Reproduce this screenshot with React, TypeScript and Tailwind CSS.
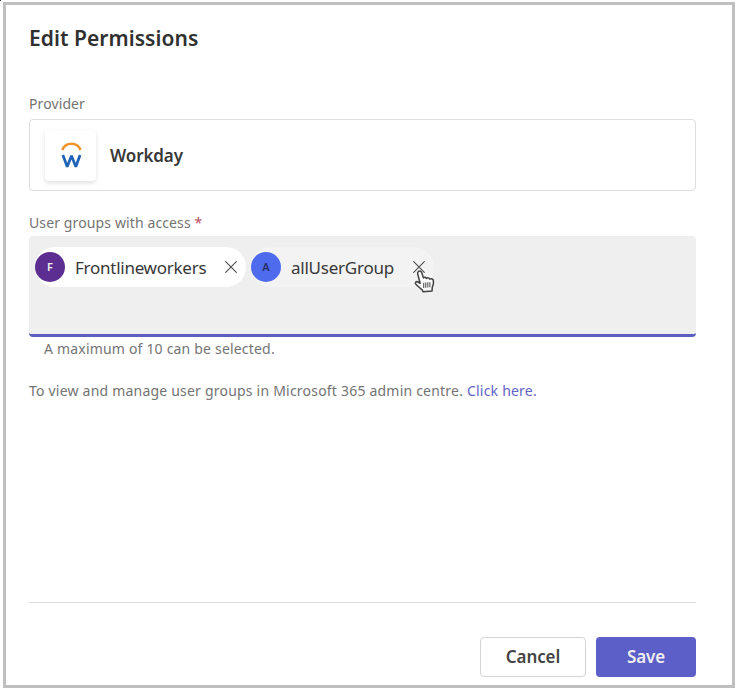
import React from "react";

function WorkdayLogo() {
  return (
    <svg width="22" height="28" viewBox="0 0 22 28" fill="none" aria-label="Workday">
      <path d="M2.3 9C5.4 .5 17.4 .5 20.5 9" stroke="#f0952d" strokeWidth="2.5" />
      <path d="M2.9 14L7.2 25.7L11.5 14.8L15.8 25.7L20.1 14" stroke="#1d62b7" strokeWidth="2.7" strokeLinejoin="bevel" />
    </svg>
  );
}

function CloseIcon() {
  return (
    <svg width="12" height="12" viewBox="0 0 12 12" fill="none" stroke="#4c4c4c" strokeWidth="1.1" strokeLinecap="round">
      <path d="M.7.7l10.6 10.6M11.3.7L.7 11.3" />
    </svg>
  );
}

function HandCursor() {
  return (
    <svg className="absolute left-0 top-[8px]" width="24" height="26" viewBox="0 0 22 24" fill="none">
      <path
        d="M5 2.2C6.4 1.2 7.5 2 8 3.4L9.6 8.2C10.5 7.3 11.8 7.6 12.3 8.8C13.3 7.7 14.8 8.1 15.4 9.4C17 8.5 18.6 9.3 18.8 11.1C19.1 13.3 18.5 15.2 17.7 17L17.5 20.2L9.3 21.1L8.4 19.3C6.7 17.9 4.8 16.1 2.8 14.3C1.1 12.8 2.8 11 4.6 12L6.5 13.2L4.3 4.7C4 3.6 4.2 2.7 5 2.2Z"
        fill="#fafafa"
        stroke="#414141"
        strokeWidth="1.4"
        strokeLinejoin="round"
      />
      <path d="M9.8 12.6v5M11.7 12.4v5M13.6 12.3v4.8M15.5 12.2v4.6" stroke="#555" strokeWidth="1" />
    </svg>
  );
}

export default function App() {
  return (
    <div className="h-[688px] w-[735px] overflow-hidden bg-white pl-[3px] pt-[2px] font-['Noto_Sans','Open_Sans',sans-serif]">
      <div className="absolute left-0 top-0 size-px bg-[#333]" />
      <section className="flex h-[686px] w-[732px] flex-col border-[3px] border-[#bfbfbf] pl-[23px] pr-[36px] whitespace-nowrap">
        <h1 className="mt-[18px] h-[30px] text-[21px] font-semibold leading-[30px] tracking-[0.05px] text-[#303030]">
          <span>Edit Permissions</span>
        </h1>
        <p className="mt-[41px] h-5 text-[14px] leading-5 tracking-[0.1px] text-[#747474]"><span>Provider</span></p>
        <div className="mt-[5px] flex h-[72px] shrink-0 items-center rounded-[4px] border border-[#dedede] pl-[15px]">
          <div className="flex size-[51px] items-center justify-center rounded-[4px] bg-white shadow-[0_2px_4px_rgba(0,0,0,0.13)]">
            <WorkdayLogo />
          </div>
          <span className="ml-[14px] pt-px text-[17px] font-semibold leading-6 tracking-[-0.1px] text-[#383838]">Workday</span>
        </div>
        <p className="mt-[22px] h-5 text-[14px] leading-5 tracking-[0.12px] text-[#747474]">
          <span>User groups with access</span> <span className="text-[#b85060]">*</span>
        </p>
        <div className="mt-[3px] flex h-[101px] shrink-0 items-start gap-[5px] overflow-hidden rounded-[4px] border-b-[3px] border-[#5b5fc0] bg-[#efefef] pl-[6px] pt-[11px]">
          <div className="flex h-10 w-[211px] items-center rounded-full bg-white">
            <span className="flex size-[30px] items-center justify-center rounded-full bg-[#5c2e91] text-[11px] font-semibold text-[#eee]">F</span>
            <span className="ml-[10px] w-[150px] pt-px text-[17px] tracking-[-0.26px] text-[#383838]"><span>Frontlineworkers</span></span>
            <CloseIcon />
          </div>
          <div className="relative flex h-10 w-[183px] items-center rounded-full bg-[#f3f3f3]">
            <span className="flex size-[30px] items-center justify-center rounded-full bg-[#4f6bed] text-[11px] font-semibold text-[#243068]">A</span>
            <span className="ml-[10px] w-[122px] pt-px text-[17px] tracking-[-0.24px] text-[#383838]"><span>allUserGroup</span></span>
            <span className="relative flex"><CloseIcon /><HandCursor /></span>
          </div>
        </div>
        <p className="mt-[2px] h-5 pl-[15px] text-[14px] leading-5 tracking-[0.19px] text-[#747474]"><span>A maximum of 10 can be selected.</span></p>
        <p className="mt-[22px] h-5 text-[14px] leading-5 tracking-[0.21px] text-[#747474]">
          <span>To view and manage user groups in Microsoft 365 admin centre.</span> <a className="text-[#6264c4]">Click here.</a>
        </p>
        <footer className="mt-auto mb-[8px] flex h-[75px] items-end justify-end gap-[10px] border-t border-[#dedede]">
          <button className="h-10 w-[106px] rounded-[4px] border border-[#d4d4d4] text-[17px] font-semibold tracking-[-0.1px] text-[#444]">Cancel</button>
          <button className="h-10 w-[100px] rounded-[4px] bg-[#5b5fc7] text-[17px] font-semibold tracking-[-0.1px] text-[#eee]">Save</button>
        </footer>
      </section>
    </div>
  );
}
